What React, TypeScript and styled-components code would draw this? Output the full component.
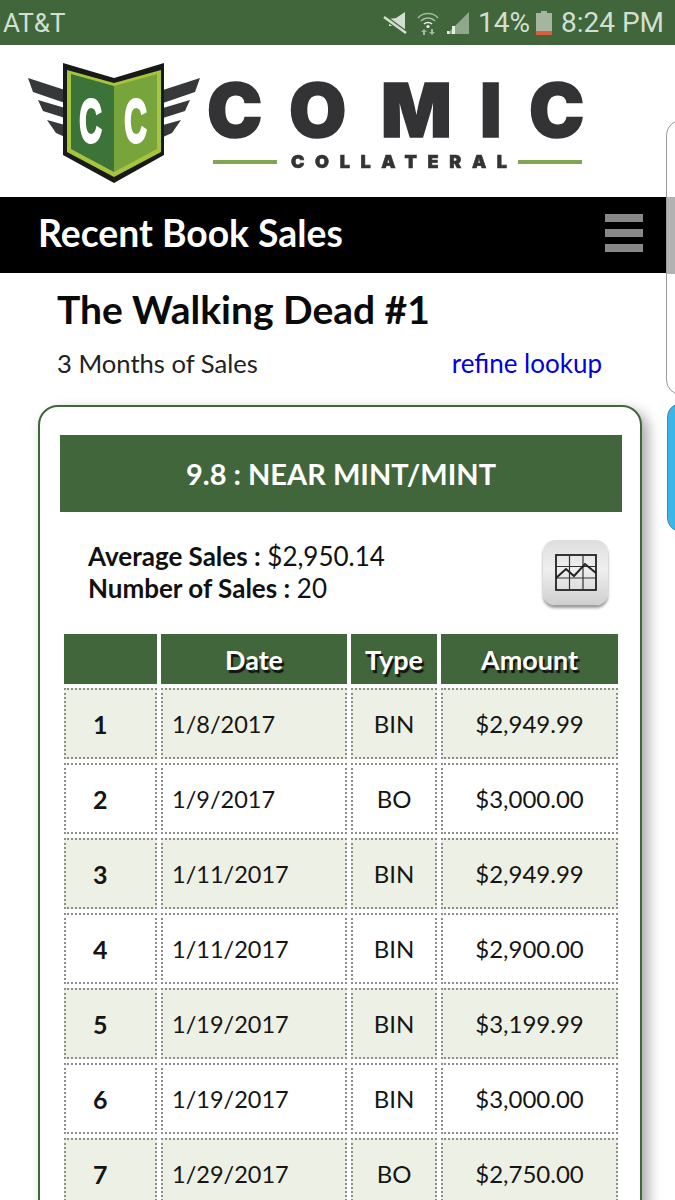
import * as React from 'react'
import styled, { createGlobalStyle } from 'styled-components'

const green = '#41663b'

const rows = [
  ['1', '1/8/2017', 'BIN', '$2,949.99'],
  ['2', '1/9/2017', 'BO', '$3,000.00'],
  ['3', '1/11/2017', 'BIN', '$2,949.99'],
  ['4', '1/11/2017', 'BIN', '$2,900.00'],
  ['5', '1/19/2017', 'BIN', '$3,199.99'],
  ['6', '1/19/2017', 'BIN', '$3,000.00'],
  ['7', '1/29/2017', 'BO', '$2,750.00']
]

const Global = createGlobalStyle`
  html, body {
    margin: 0;
    padding: 0;
    background: #fff;
    height: 1200px;
    overflow: hidden;
  }
`

const S = {
  Page: styled.div`
  position: relative;
  width: 675px;
  height: 1200px;
  overflow: hidden;
  background: #fff;
  color: #111;
  font-family: Lato, "Liberation Sans", sans-serif;
`,
  StatusBar: styled.div`
  display: flex;
  align-items: center;
  height: 45px;
  padding: 0 11px 0 3px;
  box-sizing: border-box;
  background: ${green};
  color: #d3dfd0;
  font-family: Roboto, "Liberation Sans", sans-serif;
  font-size: 28px;
`,
  Carrier: styled.span`
  flex: 1;
  font-size: 26px;
`,
  StatusIcon: styled.svg<{ $gap?: number }>`
  display: block;
  flex-shrink: 0;
  margin-left: ${p => p.$gap || 0}px;
`,
  Percent: styled.span`
  margin: 0 6px 0 8px;
`,
  Clock: styled.span`
  margin-left: 9px;
`,
  LogoBar: styled.div`
  height: 152px;
  background: #fff;
  svg {
    display: block;
    filter: blur(0.5px);
  }
`,
  NavBar: styled.div`
  display: flex;
  align-items: center;
  justify-content: space-between;
  height: 76px;
  box-sizing: border-box;
  padding: 0 32px 5px 38px;
  background: #000;
  color: #fff;
  font-size: 37.3px;
  font-weight: 700;
`,
  Burger: styled.div`
  display: flex;
  flex-direction: column;
  gap: 7px;
  span {
    display: block;
    width: 38px;
    height: 8px;
    background: #888;
  }
`,
  Heading: styled.div`
  padding: 13px 73px 0 57px;
`,
  Title: styled.h1`
  margin: 0;
  font-size: 39px;
  line-height: 46px;
  font-weight: 700;
  color: #0a0a0a;
`,
  SubRow: styled.div`
  display: flex;
  justify-content: space-between;
  margin-top: 15px;
  font-size: 25.6px;
  line-height: 32px;
  color: #222;
`,
  Refine: styled.a`
  font-size: 26px;
  color: #0000dd;
  text-decoration: none;
`,
  Card: styled.div`
  margin: 26px 33px 0 38px;
  padding: 28px 18px 40px 20px;
  border: 2px solid ${green};
  border-radius: 20px;
  background: #fff;
  box-shadow: 6px 6px 14px rgba(0, 0, 0, 0.35);
`,
  Grade: styled.div`
  display: flex;
  align-items: center;
  justify-content: center;
  height: 77px;
  background: ${green};
  color: #fff;
  font-size: 29px;
  font-weight: 700;
`,
  Stats: styled.div`
  display: flex;
  justify-content: space-between;
  padding: 28px 14px 0 28px;
  height: 118px;
  box-sizing: border-box;
  font-size: 26px;
  line-height: 32px;
`,
  StatLabel: styled.b`
  font-weight: 700;
`,
  ChartButton: styled.div`
  display: flex;
  align-items: center;
  justify-content: center;
  width: 65px;
  height: 65px;
  border-radius: 12px;
  background: linear-gradient(#dedede, #efefef 45%, #cfcfcf);
  box-shadow: 0 3px 3px rgba(0, 0, 0, 0.4);
`,
  Table: styled.table`
  border-collapse: separate;
  border-spacing: 4px;
  width: 562px;
  table-layout: fixed;
`,
  Head: styled.th`
  height: 50px;
  padding: 0;
  background: ${green};
  color: #fff;
  font-size: 27px;
  font-weight: 700;
  text-shadow: 2px 3px 1px #111;
`,
  Cell: styled.td<{ $odd: boolean }>`
  height: 71px;
  box-sizing: border-box;
  padding: 0;
  border: 2px dotted #8d8d8d;
  background: ${p => (p.$odd ? '#edf0e4' : '#fff')};
  font-size: 24px;
  text-align: center;
  color: #151515;
`,
  RankCell: styled.td<{ $odd: boolean }>`
  height: 71px;
  box-sizing: border-box;
  padding: 0 0 0 27px;
  border: 2px dotted #8d8d8d;
  background: ${p => (p.$odd ? '#edf0e4' : '#fff')};
  font-size: 25px;
  font-weight: 700;
  color: #151515;
`,
  DateCell: styled.td<{ $odd: boolean }>`
  height: 71px;
  box-sizing: border-box;
  padding: 0 0 0 9px;
  border: 2px dotted #8d8d8d;
  background: ${p => (p.$odd ? '#edf0e4' : '#fff')};
  font-size: 23.5px;
  color: #151515;
`,
  SidePanel: styled.div`
  position: absolute;
  left: 666px;
  top: 120px;
  width: 30px;
  height: 275px;
  box-sizing: border-box;
  border: 1px solid #9a9a9a;
  border-radius: 18px;
  background: linear-gradient(#fff 76px, #b2b2b2 76px, #b2b2b2 153px, #fff 153px);
`,
  BlueTab: styled.div`
  position: absolute;
  left: 667px;
  top: 403px;
  width: 30px;
  height: 129px;
  box-sizing: border-box;
  border: 1px solid #5c7f93;
  border-radius: 14px;
  background: #3bb6e8;
`
}

function Logo() {
  return (
    <svg width="675" height="152" viewBox="0 45 675 152">
      <g fill="#36383a">
        <polygon points="28,78 65,90 65,103 33,92" />
        <polygon points="38,100 65,108 65,118 43,111" />
        <polygon points="47,120 65,125 65,137 56,133" />
        <polygon points="200,78 163,90 163,103 195,92" />
        <polygon points="190,100 163,108 163,118 185,111" />
        <polygon points="181,120 163,125 163,137 172,133" />
      </g>
      <polygon points="63,63 114,78 164,63 164,155 114,183 63,155" fill="#17191a" />
      <polygon points="67,70 114,83 114,177 67,152" fill="#a6c43c" />
      <polygon points="161,70 114,83 114,177 161,152" fill="#a6c43c" />
      <polygon points="71,74 114,86 114,172 71,149" fill="#3b7338" />
      <polygon points="157,74 114,86 114,172 157,149" fill="#78a43c" />
      <g
        fontFamily='"Liberation Sans", sans-serif'
        fontWeight="700"
        fontSize="60"
        fill="#fff"
        stroke="#fff"
        strokeWidth="3"
        textAnchor="middle"
      >
        <text transform="translate(90.5 142) scale(0.52 1.03)">C</text>
        <text transform="translate(135.5 142) scale(0.52 1.03)">C</text>
      </g>
      <text
        x="207 289 381 480 529"
        y="137"
        fontFamily='Inter, "Liberation Sans", sans-serif'
        fontWeight="900"
        fontSize="74"
        fill="#333335"
        stroke="#333335"
        strokeWidth="1.5"
      >
        COMIC
      </text>
      <rect x="213" y="160" width="64" height="4" fill="#7fa650" />
      <rect x="518" y="160" width="64" height="4" fill="#7fa650" />
      <text
        x="291"
        y="168"
        textLength="216"
        fontFamily='Inter, "Liberation Sans", sans-serif'
        fontWeight="900"
        fontSize="18"
        fill="#333335"
        stroke="#333335"
        strokeWidth="0.6"
      >
        COLLATERAL
      </text>
    </svg>
  )
}

function StatusIcons() {
  return (
    <>
      <S.StatusIcon width="24" height="24" viewBox="0 0 24 24">
        <polygon points="22,1 22,22 13,15 6,15 6,8 13,7" fill="#d3dfd0" />
        <line x1="1" y1="6" x2="23" y2="22" stroke={green} strokeWidth="5" />
        <line x1="1" y1="6" x2="23" y2="22" stroke="#d3dfd0" strokeWidth="2.5" />
      </S.StatusIcon>
      <S.StatusIcon $gap={10} width="22" height="24" viewBox="0 0 22 24" fill="none">
        <g stroke="#a3b8a0" strokeWidth="1.6">
          <path d="M1 7 C6 1 16 1 21 7" />
          <path d="M4 10 C8 6 14 6 18 10" />
        </g>
        <path d="M7 13 C9 11 13 11 15 13" stroke="#e6ede4" strokeWidth="1.6" />
        <circle cx="11" cy="15.5" r="1.6" fill="#e6ede4" />
        <path d="M7 18 L4 21 H6 V24 H8 V21 H10 Z M15 24 L18 21 H16 V18 H14 V21 H12 Z" fill="#a3b8a0" />
      </S.StatusIcon>
      <S.StatusIcon $gap={7} width="24" height="24" viewBox="0 0 24 24">
        <polygon points="23,1 23,23 1,23" fill="#8fa88c" />
        <rect x="1" y="20" width="2.5" height="3" fill="#e6ede4" />
        <rect x="6" y="15" width="3" height="8" fill="#e6ede4" />
      </S.StatusIcon>
      <S.Percent>14%</S.Percent>
      <S.StatusIcon width="16" height="24" viewBox="0 0 16 24">
        <rect x="5" y="0" width="6" height="2" fill="#a5b5a0" />
        <rect x="0" y="2" width="16" height="19" fill="#a5b5a0" />
        <rect x="0" y="20" width="16" height="4" fill="#d9603c" />
      </S.StatusIcon>
    </>
  )
}

function ChartIcon() {
  return (
    <svg width="42" height="38" viewBox="0 0 42 38" fill="none" stroke="#222">
      <rect x="1" y="1" width="40" height="35" strokeWidth="1.8" />
      <path d="M14.5 1 V36 M28 1 V36 M1 12.5 H41 M1 24 H41" strokeWidth="1.2" stroke="#333" />
      <path d="M1 24 L11 15 L19 22 L30 10 L41 19" strokeWidth="2" />
    </svg>
  )
}

export default function App() {
  return (
    <S.Page>
      <Global />
      <S.StatusBar>
        <S.Carrier>AT&amp;T</S.Carrier>
        <StatusIcons />
        <S.Clock>8:24 PM</S.Clock>
      </S.StatusBar>
      <S.LogoBar>
        <Logo />
      </S.LogoBar>
      <S.NavBar>
        Recent Book Sales
        <S.Burger>
          <span />
          <span />
          <span />
        </S.Burger>
      </S.NavBar>
      <S.Heading>
        <S.Title>The Walking Dead #1</S.Title>
        <S.SubRow>
          <span>3 Months of Sales</span>
          <S.Refine href="#">refine lookup</S.Refine>
        </S.SubRow>
      </S.Heading>
      <S.Card>
        <S.Grade>9.8 : NEAR MINT/MINT</S.Grade>
        <S.Stats>
          <div>
            <S.StatLabel>Average Sales :</S.StatLabel> $2,950.14
            <br />
            <S.StatLabel>Number of Sales :</S.StatLabel> 20
          </div>
          <S.ChartButton>
            <ChartIcon />
          </S.ChartButton>
        </S.Stats>
        <S.Table>
          <colgroup>
            <col width="93" />
            <col width="186" />
            <col width="86" />
            <col width="177" />
          </colgroup>
          <thead>
            <tr>
              <S.Head />
              <S.Head>Date</S.Head>
              <S.Head>Type</S.Head>
              <S.Head>Amount</S.Head>
            </tr>
          </thead>
          <tbody>
            {rows.map((row, i) => (
              <tr key={row[0]}>
                <S.RankCell $odd={i % 2 === 0}>{row[0]}</S.RankCell>
                <S.DateCell $odd={i % 2 === 0}>{row[1]}</S.DateCell>
                <S.Cell $odd={i % 2 === 0}>{row[2]}</S.Cell>
                <S.Cell $odd={i % 2 === 0}>{row[3]}</S.Cell>
              </tr>
            ))}
          </tbody>
        </S.Table>
      </S.Card>
      <S.SidePanel />
      <S.BlueTab />
    </S.Page>
  )
}
